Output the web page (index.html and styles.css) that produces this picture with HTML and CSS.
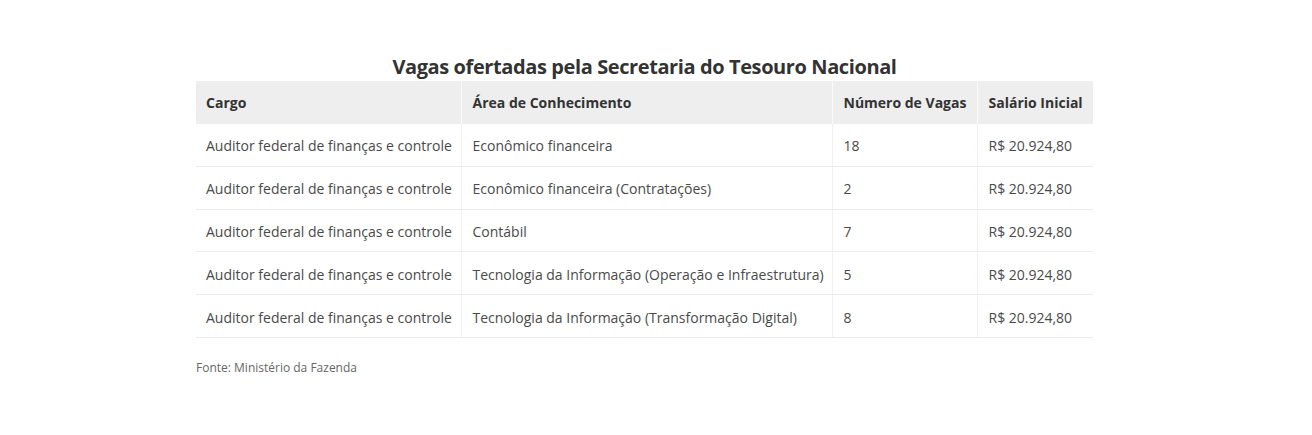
FILE: index.html
```html
<!DOCTYPE html>
<html lang="pt-BR">
<head>
<meta charset="utf-8">
<title>Vagas ofertadas pela Secretaria do Tesouro Nacional</title>
<link rel="stylesheet" href="styles.css">
</head>
<body>
<div class="wrap">
  <h2 class="title">Vagas ofertadas pela Secretaria do Tesouro Nacional</h2>
  <table class="vagas">
    <colgroup>
      <col class="c1"><col class="c2"><col class="c3"><col class="c4">
    </colgroup>
    <thead>
      <tr><th>Cargo</th><th>Área de Conhecimento</th><th>Número de Vagas</th><th>Salário Inicial</th></tr>
    </thead>
    <tbody>
      <tr><td>Auditor federal de finanças e controle</td><td>Econômico financeira</td><td>18</td><td>R$ 20.924,80</td></tr>
      <tr><td>Auditor federal de finanças e controle</td><td>Econômico financeira (Contratações)</td><td>2</td><td>R$ 20.924,80</td></tr>
      <tr><td>Auditor federal de finanças e controle</td><td>Contábil</td><td>7</td><td>R$ 20.924,80</td></tr>
      <tr><td>Auditor federal de finanças e controle</td><td>Tecnologia da Informação (Operação e Infraestrutura)</td><td>5</td><td>R$ 20.924,80</td></tr>
      <tr><td>Auditor federal de finanças e controle</td><td>Tecnologia da Informação (Transformação Digital)</td><td>8</td><td>R$ 20.924,80</td></tr>
    </tbody>
  </table>
  <p class="fonte">Fonte: Ministério da Fazenda</p>
</div>
</body>
</html>
```
FILE: styles.css
```css
html, body { margin: 0; padding: 0; background: #fff; }
body { font-family: "Open Sans", "Liberation Sans", sans-serif; color: #4a4a4a; }
.wrap { width: 897px; margin-left: 196px; padding-top: 53px; }
.title {
  margin: 0;
  text-align: center;
  font-size: 20px;
  font-weight: 700;
  color: #333;
  line-height: 28px;
  letter-spacing: -0.4px;
}
.vagas {
  width: 897px;
  border-collapse: collapse;
  table-layout: fixed;
  font-size: 14px;
}
.c1 { width: 265px; }
.c2 { width: 371px; }
.c3 { width: 145px; }
.c4 { width: 116px; }
.vagas th {
  background: #eeeeee;
  color: #333;
  font-weight: 700;
  text-align: left;
  height: 43px;
  padding: 0 10px 0 11px;
  border-left: 1px solid #fafafa;
  white-space: nowrap;
}
.vagas th:first-child, .vagas td:first-child { border-left: none; padding-left: 10px; }
.vagas td {
  height: 39.8px;
  padding: 2px 10px 0 11px;
  border-bottom: 1px solid #ececec;
  border-left: 1px solid #f0f0f0;
  white-space: nowrap;
}
.fonte {
  margin: 21px 0 0;
  font-size: 12px;
  color: #666;
}
```
